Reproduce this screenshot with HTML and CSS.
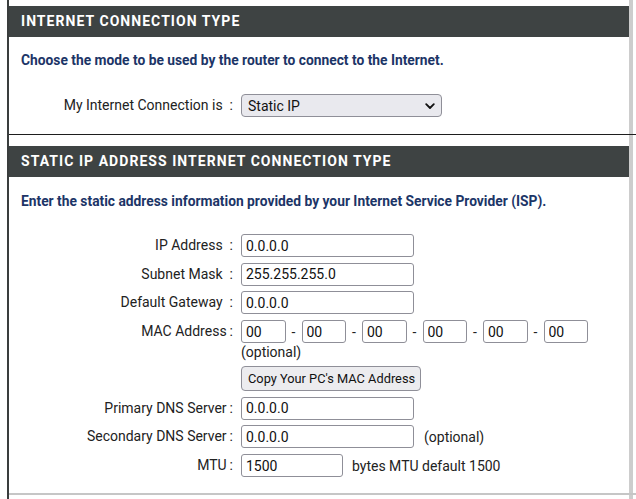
FILE: index.html
```html
<!DOCTYPE html>
<html lang="en">
<head>
<meta charset="utf-8">
<title>Internet Connection Type</title>
<link rel="stylesheet" href="styles.css">
</head>
<body>
<div class="frame">
  <section class="panel">
    <h2 class="panel-title">Internet Connection Type</h2>
    <div class="panel-body body-first">
      <p class="intro">Choose the mode to be used by the router to connect to the Internet.</p>
      <div class="form form-first">
        <label class="label">My Internet Connection is<span class="colon wide">:</span></label>
        <div class="field">
          <div class="select-wrap">
            <select class="select"><option>Static IP</option></select>
            <svg class="chev" width="10" height="7" viewBox="0 0 10 7"><path d="M1.2 1.2 L5 5 L8.8 1.2" fill="none" stroke="#111" stroke-width="1.8" stroke-linecap="round" stroke-linejoin="round"/></svg>
          </div>
        </div>
      </div>
    </div>
  </section>

  <section class="panel panel-last">
    <h2 class="panel-title">Static IP Address Internet Connection Type</h2>
    <div class="panel-body body-second">
      <p class="intro">Enter the static address information provided by your Internet Service Provider (ISP).</p>
      <div class="form">
        <label class="label">IP Address<span class="colon wide">:</span></label>
        <div class="field"><input class="input" type="text" value="0.0.0.0"></div>

        <label class="label">Subnet Mask<span class="colon wide">:</span></label>
        <div class="field"><input class="input" type="text" value="255.255.255.0"></div>

        <label class="label">Default Gateway<span class="colon wide">:</span></label>
        <div class="field"><input class="input" type="text" value="0.0.0.0"></div>

        <label class="label">MAC Address<span class="colon">:</span></label>
        <div class="field field-stack">
          <div class="mac">
            <input class="input mac-part" type="text" value="00"><span class="dash">-</span>
            <input class="input mac-part" type="text" value="00"><span class="dash">-</span>
            <input class="input mac-part" type="text" value="00"><span class="dash">-</span>
            <input class="input mac-part" type="text" value="00"><span class="dash">-</span>
            <input class="input mac-part" type="text" value="00"><span class="dash">-</span>
            <input class="input mac-part" type="text" value="00">
          </div>
          <span class="note">(optional)</span>
          <button class="btn" type="button">Copy Your PC's MAC Address</button>
        </div>

        <label class="label">Primary DNS Server<span class="colon">:</span></label>
        <div class="field"><input class="input" type="text" value="0.0.0.0"></div>

        <label class="label">Secondary DNS Server<span class="colon">:</span></label>
        <div class="field"><input class="input" type="text" value="0.0.0.0"><span class="after after-opt">(optional)</span></div>

        <label class="label">MTU<span class="colon">:</span></label>
        <div class="field"><input class="input input-mtu" type="text" value="1500"><span class="after after-mtu">bytes MTU default 1500</span></div>
      </div>
    </div>
  </section>
</div>
</body>
</html>
```

FILE: styles.css
```css
* { box-sizing: border-box; }

html, body {
  margin: 0;
  padding: 0;
  background: #ffffff;
}

body {
  font-family: Roboto, "Liberation Sans", Arial, sans-serif;
  font-size: 14px;
  color: #222222;
  width: 636px;
  height: 499px;
  overflow: hidden;
}

.frame {
  margin-left: 7px;
  border-left: 2px solid #3a3d3d;
  padding-top: 6px;
  min-height: 499px;
  background: linear-gradient(90deg, transparent 620px, #cdcdcd 620px, #cdcdcd 624px, transparent 624px);
}

.panel {
  border-bottom: 1px solid #1e1e1e;
  margin-bottom: 11px;
}

.panel-last {
  border-bottom: 2px solid #c6c6c6;
  margin-bottom: 0;
}

.panel-title {
  margin: 0 7px 0 0;
  height: 31px;
  line-height: 31px;
  padding-left: 12px;
  background: #3e4343;
  color: #ffffff;
  font-size: 14px;
  font-weight: 700;
  letter-spacing: 1.05px;
  text-transform: uppercase;
}

.panel-body {
  padding-left: 12px;
}

.body-first {
  padding-top: 15px;
  padding-bottom: 17px;
}

.body-second {
  padding-top: 16px;
  padding-bottom: 16px;
}

.intro {
  margin: 0;
  line-height: 16px;
  font-size: 13.8px;
  font-weight: 700;
  color: #1c3567;
}

.form {
  display: grid;
  grid-template-columns: 212px auto;
  column-gap: 8px;
  row-gap: 5.7px;
  margin-top: 25px;
  margin-left: -12px;
  padding-left: 12px;
  align-items: start;
}

.form-first {
  margin-top: 26px;
}

.label {
  text-align: right;
  line-height: 23px;
  white-space: nowrap;
  color: #222222;
}

.colon {
  display: inline-block;
  margin-left: 3px;
}

.colon.wide {
  margin-left: 7px;
}

.field {
  display: flex;
  align-items: center;
}

.field-stack {
  flex-direction: column;
  align-items: flex-start;
}

.input {
  height: 23px;
  width: 173px;
  border: 1px solid #8f8f98;
  border-radius: 3px;
  padding: 0 4px;
  font-family: Roboto, "Liberation Sans", Arial, sans-serif;
  font-size: 14px;
  color: #111111;
  background: #ffffff;
  margin: 0;
}

.input-mtu {
  width: 102px;
}

.mac {
  display: flex;
  align-items: center;
}

.mac-part {
  width: 44.5px;
}

.dash {
  width: 16px;
  text-align: center;
  color: #222222;
}

.note {
  line-height: 18px;
  color: #222222;
}

.btn {
  margin-top: 5px;
  height: 25px;
  width: 180px;
  padding: 0 6px;
  border: 1px solid #8f8f98;
  border-radius: 4px;
  background: #ececef;
  font-family: Roboto, "Liberation Sans", Arial, sans-serif;
  font-size: 12.8px;
  color: #111111;
  text-align: left;
  white-space: nowrap;
}

.after {
  color: #222222;
}

.after-opt {
  margin-left: 10px;
}

.after-mtu {
  margin-left: 9px;
}

.select-wrap {
  position: relative;
  width: 201px;
  height: 23px;
}

.select {
  appearance: none;
  -webkit-appearance: none;
  width: 201px;
  height: 23px;
  border: 1px solid #8f8f98;
  border-radius: 4px;
  background: #e9e9ee;
  padding: 0 6px;
  font-family: Roboto, "Liberation Sans", Arial, sans-serif;
  font-size: 14px;
  color: #111111;
  margin: 0;
}

.chev {
  position: absolute;
  right: 7px;
  top: 9px;
  pointer-events: none;
}
```
